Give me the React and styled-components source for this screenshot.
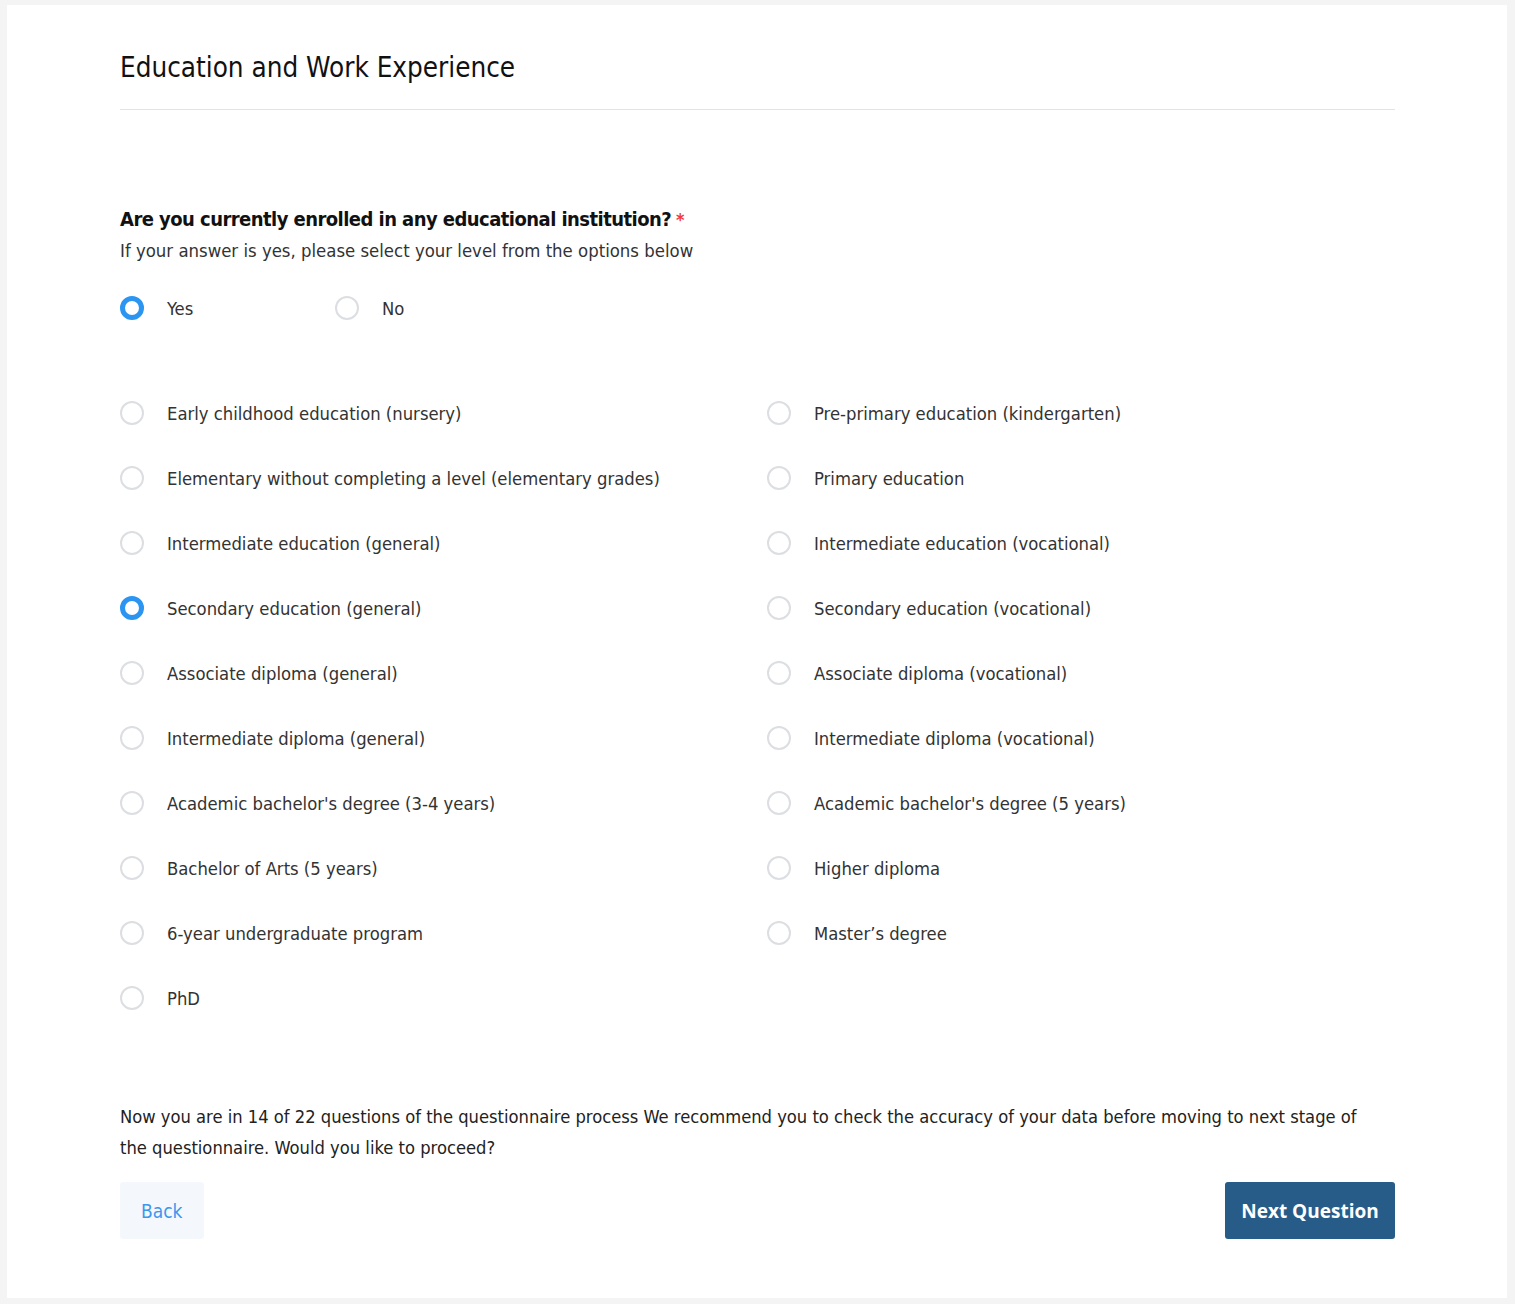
import { useState } from 'react';
import styled, { createGlobalStyle } from 'styled-components';

const GlobalStyle = createGlobalStyle`
  html, body {
    margin: 0;
    padding: 0;
    background: #f4f4f4;
  }
  body {
    font-family: 'DejaVu Sans Condensed', 'DejaVu Sans', sans-serif;
    color: #222;
  }
`;

const Page = styled.div`
  padding: 5px 8px 6px 7px;
`;

const Card = styled.main`
  background: #fff;
  padding: 45px 112px 59px 113px;
`;

const Title = styled.h1`
  margin: 0;
  font-size: 27.6px;
  font-weight: 400;
  color: #111;
  line-height: 36px;
  padding-bottom: 23px;
  border-bottom: 1px solid #e4e4e4;
`;

const Question = styled.h2`
  margin: 94px 0 0;
  font-size: 20px;
  letter-spacing: -0.55px;
  font-weight: 700;
  color: #111;
  line-height: 30px;
`;

const Required = styled.span`
  color: #ee3b3b;
  font-size: 18px;
  margin-left: 5px;
`;

const Hint = styled.p`
  margin: 3px 0 0;
  font-size: 18.4px;
  color: #333;
  line-height: 26px;
`;

const YesNo = styled.div`
  display: flex;
  margin-top: 32px;
`;

const Options = styled.div`
  display: grid;
  grid-template-columns: 647px 1fr;
  row-gap: 41px;
  margin-top: 81px;
`;

const OptionLabel = styled.label`
  display: flex;
  align-items: center;
  gap: 23px;
  height: 24px;
  width: ${(p) => p.width || 'auto'};
  font-size: 18.3px;
  color: #333;
  cursor: pointer;
`;

const Radio = styled.span`
  flex: none;
  width: 24px;
  height: 24px;
  box-sizing: border-box;
  border-radius: 50%;
  border: ${(p) => (p.checked ? '5px solid #2b95f1' : '2px solid #dcdee2')};
  background: #fff;
`;

const Footer = styled.p`
  margin: 91px 0 0;
  max-width: 1262px;
  font-size: 18.2px;
  line-height: 31px;
  color: #222;
`;

const Actions = styled.div`
  display: flex;
  justify-content: space-between;
  margin-top: 19px;
`;

const BackButton = styled.button`
  height: 57px;
  padding: 0 21px;
  border: none;
  border-radius: 3px;
  background: #f4f8fd;
  color: #3d96ee;
  font-family: inherit;
  font-size: 19px;
  cursor: pointer;
`;

const NextButton = styled.button`
  height: 57px;
  width: 170px;
  border: none;
  border-radius: 3px;
  background: #275b88;
  color: #fff;
  font-family: 'Open Sans', sans-serif;
  font-weight: 700;
  font-size: 19px;
  cursor: pointer;
`;

const levels = [
  'Early childhood education (nursery)',
  'Pre-primary education (kindergarten)',
  'Elementary without completing a level (elementary grades)',
  'Primary education',
  'Intermediate education (general)',
  'Intermediate education (vocational)',
  'Secondary education (general)',
  'Secondary education (vocational)',
  'Associate diploma (general)',
  'Associate diploma (vocational)',
  'Intermediate diploma (general)',
  'Intermediate diploma (vocational)',
  "Academic bachelor's degree (3-4 years)",
  "Academic bachelor's degree (5 years)",
  'Bachelor of Arts (5 years)',
  'Higher diploma',
  '6-year undergraduate program',
  'Master’s degree',
  'PhD',
];

function Option({ label, checked, onSelect, width }) {
  return (
    <OptionLabel width={width} onClick={onSelect}>
      <Radio checked={checked} />
      {label}
    </OptionLabel>
  );
}

export default function App() {
  const [enrolled, setEnrolled] = useState('yes');
  const [level, setLevel] = useState('Secondary education (general)');

  return (
    <Page>
      <GlobalStyle />
      <Card>
        <Title>Education and Work Experience</Title>
        <Question>
          Are you currently enrolled in any educational institution?
          <Required>*</Required>
        </Question>
        <Hint>If your answer is yes, please select your level from the options below</Hint>
        <YesNo>
          <Option label="Yes" width="215px" checked={enrolled === 'yes'} onSelect={() => setEnrolled('yes')} />
          <Option label="No" checked={enrolled === 'no'} onSelect={() => setEnrolled('no')} />
        </YesNo>
        <Options>
          {levels.map((l) => (
            <Option key={l} label={l} checked={level === l} onSelect={() => setLevel(l)} />
          ))}
        </Options>
        <Footer>
          Now you are in 14 of 22 questions of the questionnaire process We recommend you to check the
          accuracy of your data before moving to next stage of the questionnaire. Would you like to proceed?
        </Footer>
        <Actions>
          <BackButton>Back</BackButton>
          <NextButton>Next Question</NextButton>
        </Actions>
      </Card>
    </Page>
  );
}
